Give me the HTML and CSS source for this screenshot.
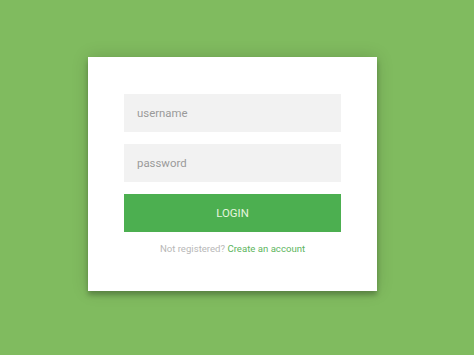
FILE: index.html
```html
<!DOCTYPE html>
<html>
<head>
<meta charset="utf-8">
<link rel="stylesheet" href="styles.css">
</head>
<body>
<div class="page">
  <form class="card">
    <input class="field" type="text" placeholder="username">
    <input class="field" type="password" placeholder="password">
    <button class="btn" type="button">LOGIN</button>
    <p class="message">Not registered? <a href="#">Create an account</a></p>
  </form>
</div>
</body>
</html>
```
FILE: styles.css
```css
html, body {
  margin: 0;
  height: 100%;
}
body {
  background: #80bb5f;
  font-family: Roboto, "Liberation Sans", sans-serif;
}
.page {
  padding: 57px 0 0 88px;
}
.card {
  box-sizing: border-box;
  width: 289px;
  height: 234px;
  background: #fff;
  padding: 37px 36px 0;
  display: flex;
  flex-direction: column;
  box-shadow: 0 0 16px 0 rgba(0,0,0,0.16), 0 4px 5px 0 rgba(0,0,0,0.24);
}
.field {
  box-sizing: border-box;
  height: 38px;
  width: 100%;
  border: 0;
  outline: 0;
  margin: 0 0 12px;
  padding: 0 13px;
  background: #f2f2f2;
  font-family: Roboto, "Liberation Sans", sans-serif;
  font-size: 11.4px;
  color: #555;
}
.field::placeholder {
  color: #9a9a9a;
}
.btn {
  box-sizing: border-box;
  height: 38px;
  width: 100%;
  margin-top: 0;
  border: 0;
  background: #4caf50;
  color: #e6f5df;
  font-family: Roboto, "Liberation Sans", sans-serif;
  font-size: 11.4px;
  text-transform: uppercase;
  padding: 0;
}
.message {
  margin: 11px 0 0;
  text-align: center;
  font-size: 9.6px;
  color: #b8b8b8;
}
.message a {
  color: #5db560;
  text-decoration: none;
}
```
